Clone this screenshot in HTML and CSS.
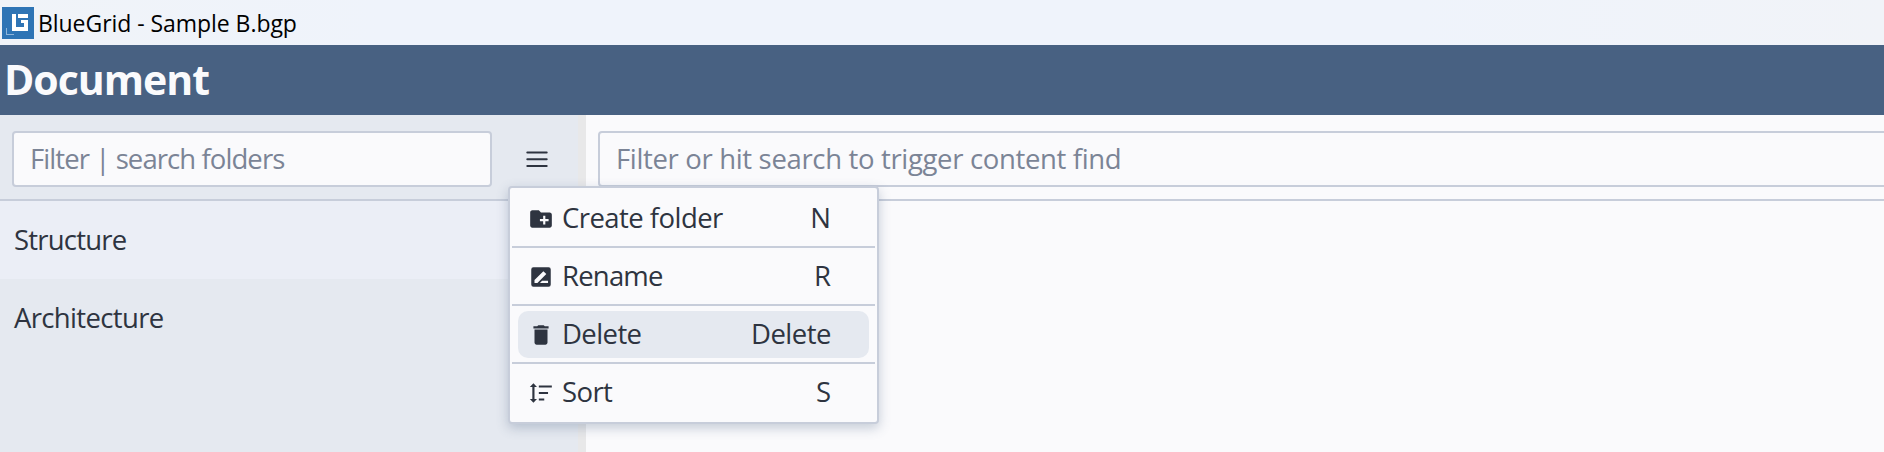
FILE: index.html
```html
<!DOCTYPE html>
<html lang="en">
<head>
<meta charset="utf-8">
<title>BlueGrid - Sample B.bgp</title>
<link rel="stylesheet" href="styles.css">
</head>
<body>
<div class="titlebar">
  <svg class="logo" width="32" height="32" viewBox="0 0 32 32" shape-rendering="crispEdges">
    <rect width="32" height="32" fill="#2e74b5"/>
    <path d="M10 7h4v13h8v-4h-3v-3h7v11H10z" fill="#fff"/>
    <path d="M16 7h10v4H16z" fill="#fff"/>
    <path d="M4 21h1v6h7v1H4z" fill="#8fb5da"/>
  </svg>
  <span class="window-title">BlueGrid - Sample B.bgp</span>
</div>
<header class="header"><h1 class="heading">Document</h1></header>
<main class="workspace">
  <section class="sidebar">
    <div class="sidebar-tools">
      <input class="field folder-filter" type="text" placeholder="Filter | search folders">
      <div class="menu-anchor">
        <button class="menu-button" aria-label="Folder menu">
          <svg width="22" height="18" viewBox="0 0 22 18" stroke="#2e3440" stroke-width="2" stroke-linecap="round"><path d="M1.3 2.5h19.4M1.3 9.2h19.4M1.3 16h19.4"/></svg>
        </button>
        <div class="menu">
          <div class="menu-slot"><div class="menu-item">
            <svg class="icon" viewBox="0 0 24 24"><path d="M20 6h-8l-2-2H4c-1.11 0-1.99.89-1.99 2L2 18c0 1.11.89 2 2 2h16c1.11 0 2-.89 2-2V8c0-1.11-.89-2-2-2zm-1 8h-3v3h-2v-3h-3v-2h3V9h2v3h3v2z"/></svg>
            <span class="label create">Create folder</span><span class="key">N</span>
          </div></div>
          <div class="menu-slot"><div class="menu-item">
            <svg class="icon" viewBox="0 0 24 24"><path fill-rule="evenodd" d="M5 3h14a2 2 0 0 1 2 2v14a2 2 0 0 1-2 2H5a2 2 0 0 1-2-2V5a2 2 0 0 1 2-2zM6 14.800v2.700h2.700l8.200-8.200-2.700-2.700zM11 17.500h7.500v-2H13z"/></svg>
            <span class="label rename">Rename</span><span class="key">R</span>
          </div></div>
          <div class="menu-slot"><div class="menu-item active">
            <svg class="icon" viewBox="0 0 24 24"><path d="M6 19c0 1.1.9 2 2 2h8c1.1 0 2-.9 2-2V7H6v12zM19 4h-3.500l-1-1h-5l-1 1H5v2h14V4z"/></svg>
            <span class="label delete">Delete</span><span class="key delete">Delete</span>
          </div></div>
          <div class="menu-slot"><div class="menu-item">
            <svg class="icon" viewBox="0 0 24 24"><path d="M5 3 1.700 6.500H4v11H1.700L5 21l3.300-3.500H6v-11h2.300zM10 5h12v2H10zM10 11h8.500v2H10zM10 17h5v2h-5z"/></svg>
            <span class="label sort">Sort</span><span class="key">S</span>
          </div></div>
        </div>
      </div>
    </div>
    <div class="folder selected"><span class="structure">Structure</span></div>
    <div class="folder"><span class="architecture">Architecture</span></div>
  </section>
  <div class="splitter"></div>
  <section class="content">
    <div class="content-tools">
      <input class="field content-filter" type="text" placeholder="Filter or hit search to trigger content find">
    </div>
  </section>
</main>
</body>
</html>
```
FILE: styles.css
```css
* { box-sizing: border-box; }
body {
  margin: 0;
  height: 452px;
  overflow: hidden;
  display: flex;
  flex-direction: column;
  background: #fafafc;
  color: #2e3440;
  font: 27.5px/36px "Open Sans", "Noto Sans", sans-serif;
}
.titlebar {
  flex: 0 0 45px;
  display: flex;
  align-items: center;
  padding: 0 2px;
  gap: 4px;
  background: linear-gradient(90deg, #f0f3f8, #eff3fb 20%, #eff3fb 75%, #f1f3f8);
}
.window-title { font-size: 23px; line-height: 32px; color: #000; letter-spacing: -0.05px; padding-top: 1px; }
.header { flex: 0 0 70px; display: flex; align-items: center; padding: 0 0 2px 4px; background: #486182; }
.heading { margin: 0; font-size: 41px; line-height: 56px; font-weight: 700; letter-spacing: -1px; color: #fafafc; }
.workspace { flex: 1; display: flex; min-height: 0; }
.sidebar { flex: 0 0 578px; min-width: 0; background: #e5e9f0; }
.splitter { flex: 0 0 8px; background: #e8e8e9; }
.sidebar-tools, .content-tools {
  height: 86px;
  padding: 16px 0 0 12px;
  border-bottom: 2px solid #c7cdda;
  display: flex;
}
.field {
  height: 56px;
  padding: 0 16px 2px;
  border: 2px solid #c7cdda;
  border-radius: 4px;
  background: #fafafc;
  font: inherit;
}
.field::placeholder { color: #7b8496; opacity: 1; }
.folder-filter { flex: 0 0 480px; letter-spacing: -0.92px; }
.content { flex: 1; min-width: 0; overflow: hidden; }
.content-filter { flex: 0 0 1320px; letter-spacing: -0.34px; }
.menu-anchor { position: relative; padding-left: 17px; }
.menu-button {
  width: 56px;
  height: 56px;
  border: 0;
  padding: 0;
  background: none;
  display: flex;
  align-items: center;
  justify-content: center;
}
.menu {
  position: absolute;
  z-index: 2;
  left: 16px;
  top: 55px;
  width: 371px;
  padding: 0 2px;
  border: 2px solid #c7cdda;
  border-radius: 4px;
  background: #fafafc;
  box-shadow: 0 4px 12px rgba(72, 97, 130, .3);
}
.menu-slot { height: 58px; padding: 5px 6px; border-bottom: 2px solid #c7cdda; }
.menu-slot:first-child { height: 60px; padding-top: 7px; }
.menu-slot:last-child { border-bottom: 0; }
.menu-item { height: 47px; display: flex; align-items: center; padding: 0 38px 0 10px; border-radius: 10px; }
.active { background: #e5e9f0; }
.icon { flex: none; width: 26px; height: 26px; fill: #2e3440; margin-right: 8px; }
.label, .key { padding-bottom: 2px; }
.key { margin-left: auto; }
.create { letter-spacing: -0.55px; }
.rename { letter-spacing: -0.8px; }
.delete, .sort { letter-spacing: -0.6px; }
.key.delete { letter-spacing: -0.5px; }
.folder { height: 78px; padding: 0 14px; display: flex; align-items: center; }
.selected { background: #ebeef6; }
.structure { letter-spacing: -0.8px; }
.architecture { letter-spacing: -0.65px; }
```
